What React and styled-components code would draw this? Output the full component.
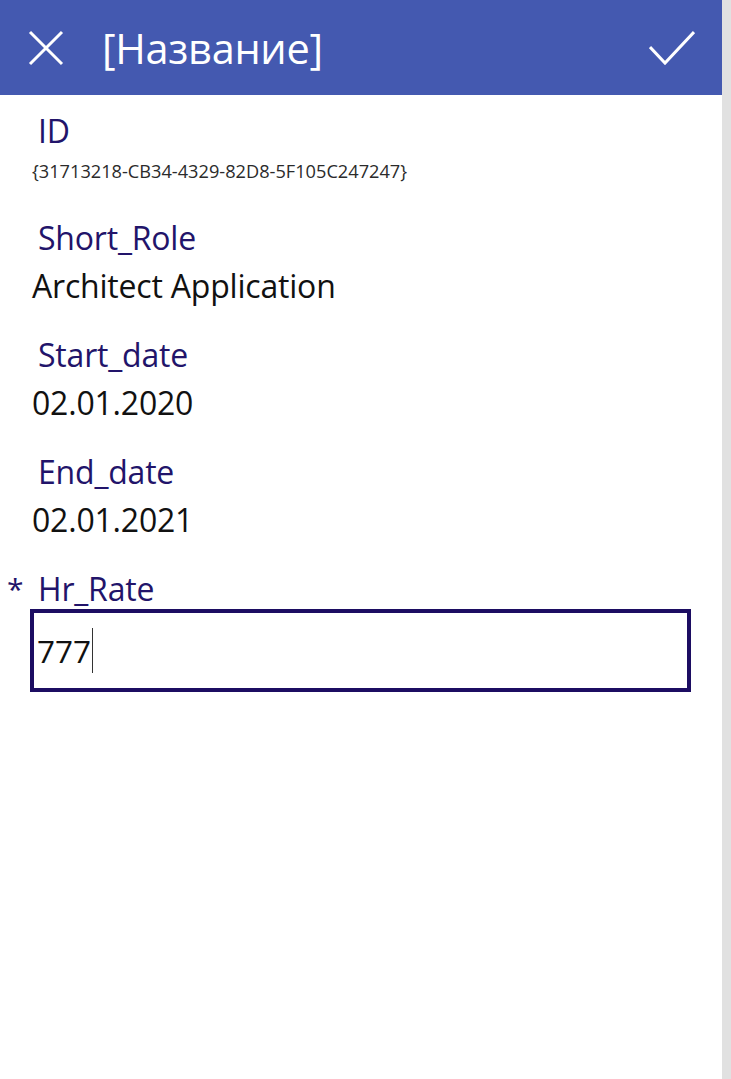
import styled, { createGlobalStyle } from "styled-components";

const GlobalStyle = createGlobalStyle`
  html, body {
    margin: 0;
    padding: 0;
    background: #ffffff;
  }
  body {
    font-family: "Open Sans", "Noto Sans", sans-serif;
  }
`;

const Screen = styled.div`
  display: flex;
  width: 731px;
  height: 1079px;
  overflow: hidden;
`;

const Main = styled.div`
  flex: 1;
  display: flex;
  flex-direction: column;
`;

const Scrollbar = styled.div`
  width: 9px;
  background: #e1e1e1;
`;

const Header = styled.header`
  height: 95px;
  background: #4459b0;
  display: flex;
  align-items: center;
  padding: 0 27px 0 28px;
  color: #ffffff;
`;

const IconButton = styled.button`
  border: 0;
  background: none;
  padding: 0;
  width: ${(p) => p.$w}px;
  height: 36px;
  display: flex;
  align-items: center;
  justify-content: center;
  color: #ffffff;
  cursor: pointer;
`;

const Title = styled.h1`
  flex: 1;
  margin: 0 0 0 38px;
  font-size: 41.5px;
  font-weight: 400;
  line-height: 48px;
  letter-spacing: -0.3px;
`;

const Form = styled.div`
  padding-top: 16px;
  display: flex;
  flex-direction: column;
`;

const Field = styled.div`
  height: ${(p) => p.$h}px;
  display: flex;
  flex-direction: column;
`;

const LabelRow = styled.div`
  display: flex;
  height: 40px;
  align-items: center;
  color: #22146a;
`;

const Marker = styled.span`
  width: 38px;
  box-sizing: border-box;
  padding-left: 7px;
  font-size: 30px;
  line-height: 40px;
`;

const Label = styled.span`
  font-size: 32px;
  line-height: 40px;
  letter-spacing: -0.2px;
`;

const Value = styled.div`
  padding-left: 32px;
  color: ${(p) => (p.$small ? "#2b2b2b" : "#111111")};
  font-size: ${(p) => (p.$small ? 18.2 : 32)}px;
  line-height: ${(p) => (p.$small ? 24 : 56)}px;
  margin-top: ${(p) => (p.$small ? 8 : 0)}px;
  letter-spacing: ${(p) => (p.$small ? 0 : -0.2)}px;
`;

const InputBox = styled.div`
  margin: 0 0 0 30px;
  width: 661px;
  height: 83px;
  box-sizing: border-box;
  border: 4px solid #1c0d62;
  display: flex;
  align-items: center;
  padding-left: 3px;
  font-size: 31.5px;
  color: #111111;
`;

const Caret = styled.span`
  display: inline-block;
  width: 1px;
  height: 45px;
  margin-left: 1px;
  background: #333333;
`;

function CloseIcon() {
  return (
    <svg width="36" height="36" viewBox="0 0 36 36" fill="none">
      <path d="M2 2 L34 34 M34 2 L2 34" stroke="#fff" strokeWidth="3" />
    </svg>
  );
}

function CheckIcon() {
  return (
    <svg width="46" height="36" viewBox="0 0 46 36" fill="none">
      <path d="M1 17 L16 33 L45 2" stroke="#fff" strokeWidth="3" />
    </svg>
  );
}

const fields = [
  { label: "Short_Role", value: "Architect Application" },
  { label: "Start_date", value: "02.01.2020" },
  { label: "End_date", value: "02.01.2021" },
];

export default function App() {
  return (
    <>
      <GlobalStyle />
      <Screen>
        <Main>
          <Header>
            <IconButton $w={36}>
              <CloseIcon />
            </IconButton>
            <Title>[Название]</Title>
            <IconButton $w={46}>
              <CheckIcon />
            </IconButton>
          </Header>
          <Form>
            <Field $h={107}>
              <LabelRow>
                <Marker />
                <Label>ID</Label>
              </LabelRow>
              <Value $small>{"{31713218-CB34-4329-82D8-5F105C247247}"}</Value>
            </Field>
            {fields.map((f) => (
              <Field key={f.label} $h={117}>
                <LabelRow>
                  <Marker />
                  <Label>{f.label}</Label>
                </LabelRow>
                <Value>{f.value}</Value>
              </Field>
            ))}
            <Field $h={130}>
              <LabelRow>
                <Marker>*</Marker>
                <Label>Hr_Rate</Label>
              </LabelRow>
              <InputBox>
                777
                <Caret />
              </InputBox>
            </Field>
          </Form>
        </Main>
        <Scrollbar />
      </Screen>
    </>
  );
}
